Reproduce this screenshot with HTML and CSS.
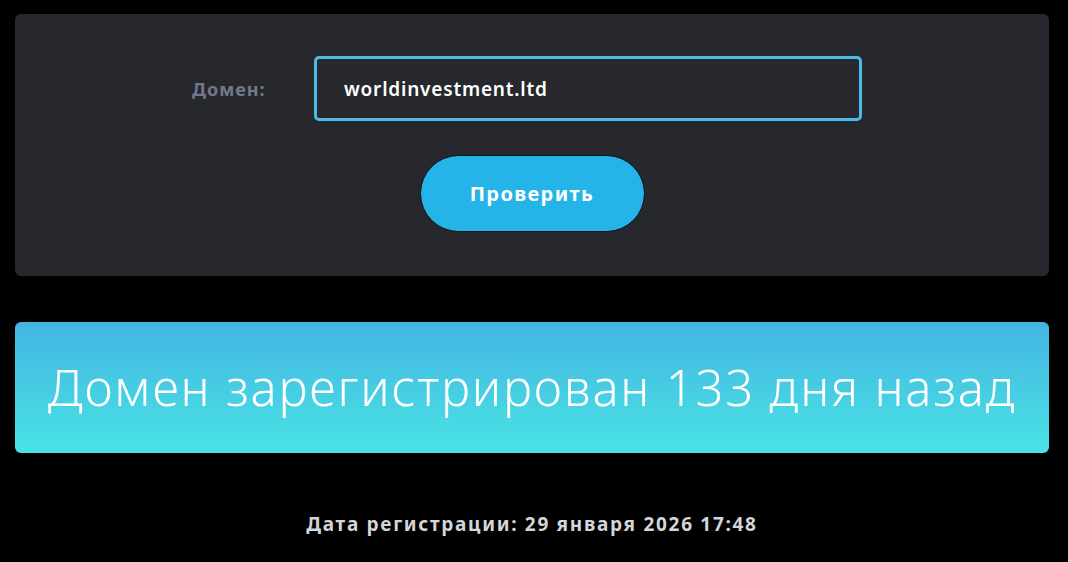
FILE: index.html
```html
<!DOCTYPE html>
<html lang="ru">
<head>
<meta charset="utf-8">
<link rel="stylesheet" href="styles.css">
</head>
<body>
<div class="page">
  <section class="card form-card">
    <div class="field-row">
      <label class="field-label">Домен:</label>
      <div class="field-input">worldinvestment.ltd</div>
    </div>
    <button class="check-btn">Проверить</button>
  </section>
  <section class="result">
    <h1 class="result-text">Домен зарегистрирован 133 дня назад</h1>
  </section>
  <p class="reg-date">Дата регистрации: 29 января 2026 17:48</p>
</div>
</body>
</html>
```
FILE: styles.css
```css
html, body {
  margin: 0;
  padding: 0;
  background: #000;
}
body {
  font-family: "Noto Sans", "DejaVu Sans", sans-serif;
}
.page {
  padding: 14px 19px 0 15px;
}
.card {
  background: #26282d;
  border-radius: 6px;
}
.form-card {
  height: 262px;
  box-sizing: border-box;
  padding-top: 42px;
  display: flex;
  flex-direction: column;
  align-items: center;
}
.field-row {
  display: flex;
  align-items: center;
  gap: 47px;
  margin-right: 10px;
}
.field-label {
  color: #6f7a8b;
  font-weight: 700;
  font-size: 18px;
  letter-spacing: 1px;
  width: 75px;
  white-space: nowrap;
}
.field-input {
  width: 548px;
  height: 65px;
  box-sizing: border-box;
  border: 3px solid #4abbe8;
  border-radius: 5px;
  padding-left: 27px;
  display: flex;
  align-items: center;
  color: #fff;
  font-weight: 600;
  font-size: 19px;
  letter-spacing: 0.8px;
}
.check-btn {
  margin-top: 34px;
  width: 225px;
  height: 77px;
  border-radius: 39px;
  background: #25b4e7;
  border: 1px solid #111;
  color: #fff;
  font-family: inherit;
  font-weight: 700;
  font-size: 20px;
  letter-spacing: 1.4px;
  cursor: pointer;
}
.result {
  margin-top: 46px;
  height: 131px;
  border-radius: 6px;
  background: linear-gradient(180deg, #44b5e3 0%, #49e3e4 100%);
  display: flex;
  align-items: center;
  justify-content: center;
}
.result-text {
  margin: 0 0 2px;
  color: #fff;
  font-weight: 300;
  font-size: 49px;
  letter-spacing: 1.8px;
  white-space: nowrap;
}
.reg-date {
  margin: 58px 0 0;
  text-align: center;
  color: #d2d5da;
  font-weight: 700;
  font-size: 19px;
  letter-spacing: 1.7px;
}
```
